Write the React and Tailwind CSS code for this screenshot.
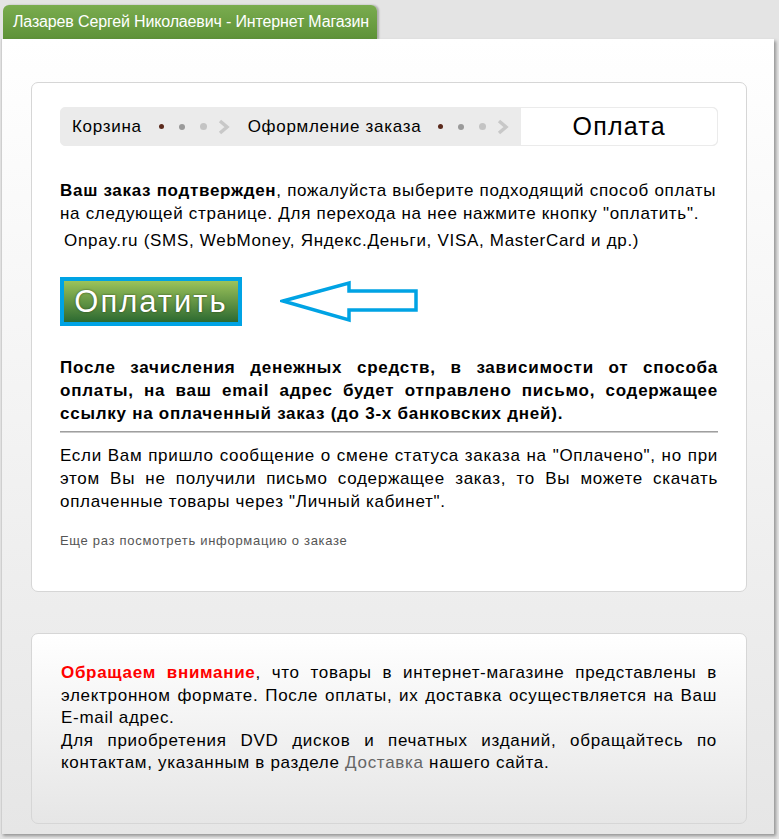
const Dots = ({ last }) => (
  <span className={`flex items-center gap-[15px] ml-[17px] ${last ? "mr-[12px]" : "mr-[18px]"}`}>
    <span className="w-[5px] h-[5px] rounded-full bg-[#5b2a1c]" />
    <span className="w-[6px] h-[6px] rounded-full bg-[#9a9a9a]" />
    <span className="w-[7px] h-[7px] rounded-full bg-[#c4c4c4]" />
    <svg width="12" height="16" viewBox="0 0 12 16" className="-ml-[4px]">
      <path d="M2 2 L9 8 L2 14" fill="none" stroke="#c8c8c8" strokeWidth="3.5" />
    </svg>
  </span>
);

const Arrow = () => (
  <svg width="140" height="44" viewBox="280 280 140 44">
    <polygon
      points="283,301 349,283 349,291 416,291 416,310 349,310 349,320"
      fill="none"
      stroke="#00a3e4"
      strokeWidth="3.5"
      strokeLinejoin="miter"
    />
  </svg>
);

export default function App() {
  return (
    <div className="min-h-[839px] bg-[#e4e4e4] pt-[5px] font-['Liberation_Sans',Arial,sans-serif] text-black">
      {/* Tab */}
      <div className="ml-[3px] w-[374px] h-[34px] rounded-t-[6px] bg-gradient-to-b from-[#7aac4f] to-[#5e9238] shadow-[2px_0_2px_rgba(0,0,0,0.25)] flex items-center pl-[10px]">
        <span className="text-white text-[16px] tracking-[-0.15px]">Лазарев Сергей Николаевич - Интернет Магазин</span>
      </div>

      {/* Main panel */}
      <div className="ml-[1px] w-[773px] h-[795px] border-l border-[#cfcfcf] bg-gradient-to-b from-white to-[#e6e6e6] shadow-[2px_2px_3px_rgba(0,0,0,0.35)] pt-[43px] px-[29px]">
        {/* Card 1 */}
        <div className="w-[716px] h-[510px] rounded-[7px] border border-[#d6d6d6] bg-white pt-[24px] px-[28px]">
          {/* Breadcrumb */}
          <div className="flex h-[39px] rounded-[5px] bg-[#ebebeb] border border-[#ebebeb] overflow-hidden">
            <div className="flex items-center pl-[11px] text-[17px] tracking-[0.7px]">
              <span>Корзина</span>
              <Dots />
              <span>Оформление заказа</span>
              <Dots last />
            </div>
            <div className="flex-1 bg-white flex items-center justify-center text-[25px] tracking-[1.2px] rounded-r-[5px]">
              Оплата
            </div>
          </div>

          <div className="mt-[33px] text-[17px] tracking-[0.7px] leading-[23px]">
            <p>
              <b>Ваш заказ подтвержден</b>, пожалуйста выберите подходящий способ оплаты на следующей странице. Для перехода на нее нажмите кнопку "оплатить".
            </p>
            <p className="mt-[4px] pl-[4px]">Onpay.ru (SMS, WebMoney, Яндекс.Деньги, VISA, MasterCard и др.)</p>
          </div>

          <div className="mt-[25px] flex items-center">
            <button className="w-[182px] h-[49px] border-[4px] border-[#00a3e4] bg-gradient-to-b from-[#9cc35a] to-[#2b6a31] text-white text-[31px] tracking-[2px] leading-none [text-shadow:0_0_2px_rgba(40,60,20,0.9)]">
              Оплатить
            </button>
            <div className="ml-[38px]">
              <Arrow />
            </div>
          </div>

          <p className="mt-[30px] text-[17px] tracking-[0.75px] leading-[23px] font-bold text-justify">
            После зачисления денежных средств, в зависимости от способа оплаты, на ваш email адрес будет отправлено письмо, содержащее ссылку на оплаченный заказ (до 3-х банковских дней).
          </p>
          <hr className="mt-[6px] border-0 h-[2px] bg-gradient-to-b from-[#8a8a8a] to-[#e0e0e0]" />
          <p className="mt-[11px] text-[17px] tracking-[0.7px] leading-[23px] text-justify">
            Если Вам пришло сообщение о смене статуса заказа на "Оплачено", но при этом Вы не получили письмо содержащее заказ, то Вы можете скачать оплаченные товары через "Личный кабинет".
          </p>
          <p className="mt-[18px] text-[13px] tracking-[0.7px] text-[#555]">Еще раз посмотреть информацию о заказе</p>
        </div>

        {/* Card 2 */}
        <div className="mt-[41px] w-[716px] h-[191px] rounded-[7px] border border-[#d6d6d6] bg-gradient-to-b from-white to-[#e6e6e6] pt-[28px] px-[29px] text-[17px] tracking-[0.7px]">
          <p className="leading-[22.5px] text-justify">
            <b className="text-[#ff0000]">Обращаем внимание</b>, что товары в интернет-магазине представлены в электронном формате. После оплаты, их доставка осуществляется на Ваш <span className="whitespace-nowrap">E-mail</span> адрес.
          </p>
          <p className="leading-[22.5px] text-justify">
            Для приобретения DVD дисков и печатных изданий, обращайтесь по контактам, указанным в разделе <span className="text-[#666]">Доставка</span> нашего сайта.
          </p>
        </div>
      </div>
    </div>
  );
}
